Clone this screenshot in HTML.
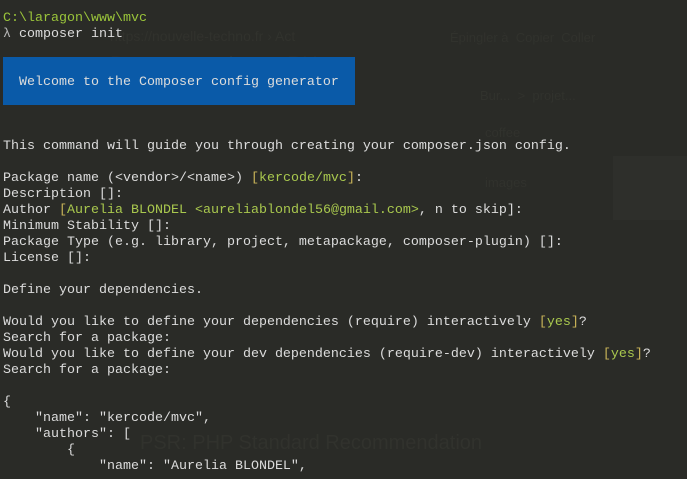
<!DOCTYPE html>
<html><head><meta charset="utf-8"><style>
html,body{margin:0;padding:0;width:687px;height:479px;overflow:hidden;background:#2a2b27;}
.g{position:absolute;color:#31322d;font-family:"Liberation Sans",sans-serif;white-space:nowrap}
pre{position:absolute;left:3px;top:11px;margin:0;font-family:"Liberation Mono",monospace;font-size:13.33px;line-height:16px;color:#dcdcdc;}
.gr{color:#9ac43a}.y{color:#c9b458}.v{color:#a9c84e}.dim{color:#b8b8b8}
.box{position:absolute;left:3px;top:57px;width:352px;height:48px;background:#0a5aa8;}
</style></head><body>
<div class="g" style="left:110px;top:28px;font-size:14px">https://nouvelle-techno.fr › Act</div>
<div class="g" style="left:110px;top:52px;font-size:22px">Bonnes pratiques PH</div>
<div class="g" style="left:450px;top:30px;font-size:13px">Épingler à &nbsp;Copier &nbsp;Coller</div>
<div class="g" style="left:480px;top:88px;font-size:13px">Bur... &nbsp;&gt; &nbsp;projet...</div>
<div class="g" style="left:485px;top:125px;font-size:13px">coffee</div>
<div class="g" style="left:485px;top:175px;font-size:13px">images</div>
<div class="g" style="left:140px;top:432px;font-size:20px">PSR: PHP Standard Recommendation</div>
<div style="position:absolute;left:613px;top:156px;width:74px;height:64px;background:#2e2f2b"></div>
<div class="box"></div>
<pre><span class="gr">C:\laragon\www\mvc</span>
<span class="dim">λ</span> composer init


  Welcome to the Composer config generator



This command will guide you through creating your composer.json config.

Package name (&lt;vendor&gt;/&lt;name&gt;) <span class="y">[</span><span class="v">kercode/mvc</span><span class="y">]</span>:
Description []:
Author <span class="y">[</span><span class="v">Aurelia BLONDEL &lt;aureliablondel56@gmail.com&gt;</span>, n to skip]:
Minimum Stability []:
Package Type (e.g. library, project, metapackage, composer-plugin) []:
License []:

Define your dependencies.

Would you like to define your dependencies (require) interactively <span class="y">[</span><span class="v">yes</span><span class="y">]</span>?
Search for a package:
Would you like to define your dev dependencies (require-dev) interactively <span class="y">[</span><span class="v">yes</span><span class="y">]</span>?
Search for a package:

{
    "name": "kercode/mvc",
    "authors": [
        {
            "name": "Aurelia BLONDEL",
</pre>
</body></html>
